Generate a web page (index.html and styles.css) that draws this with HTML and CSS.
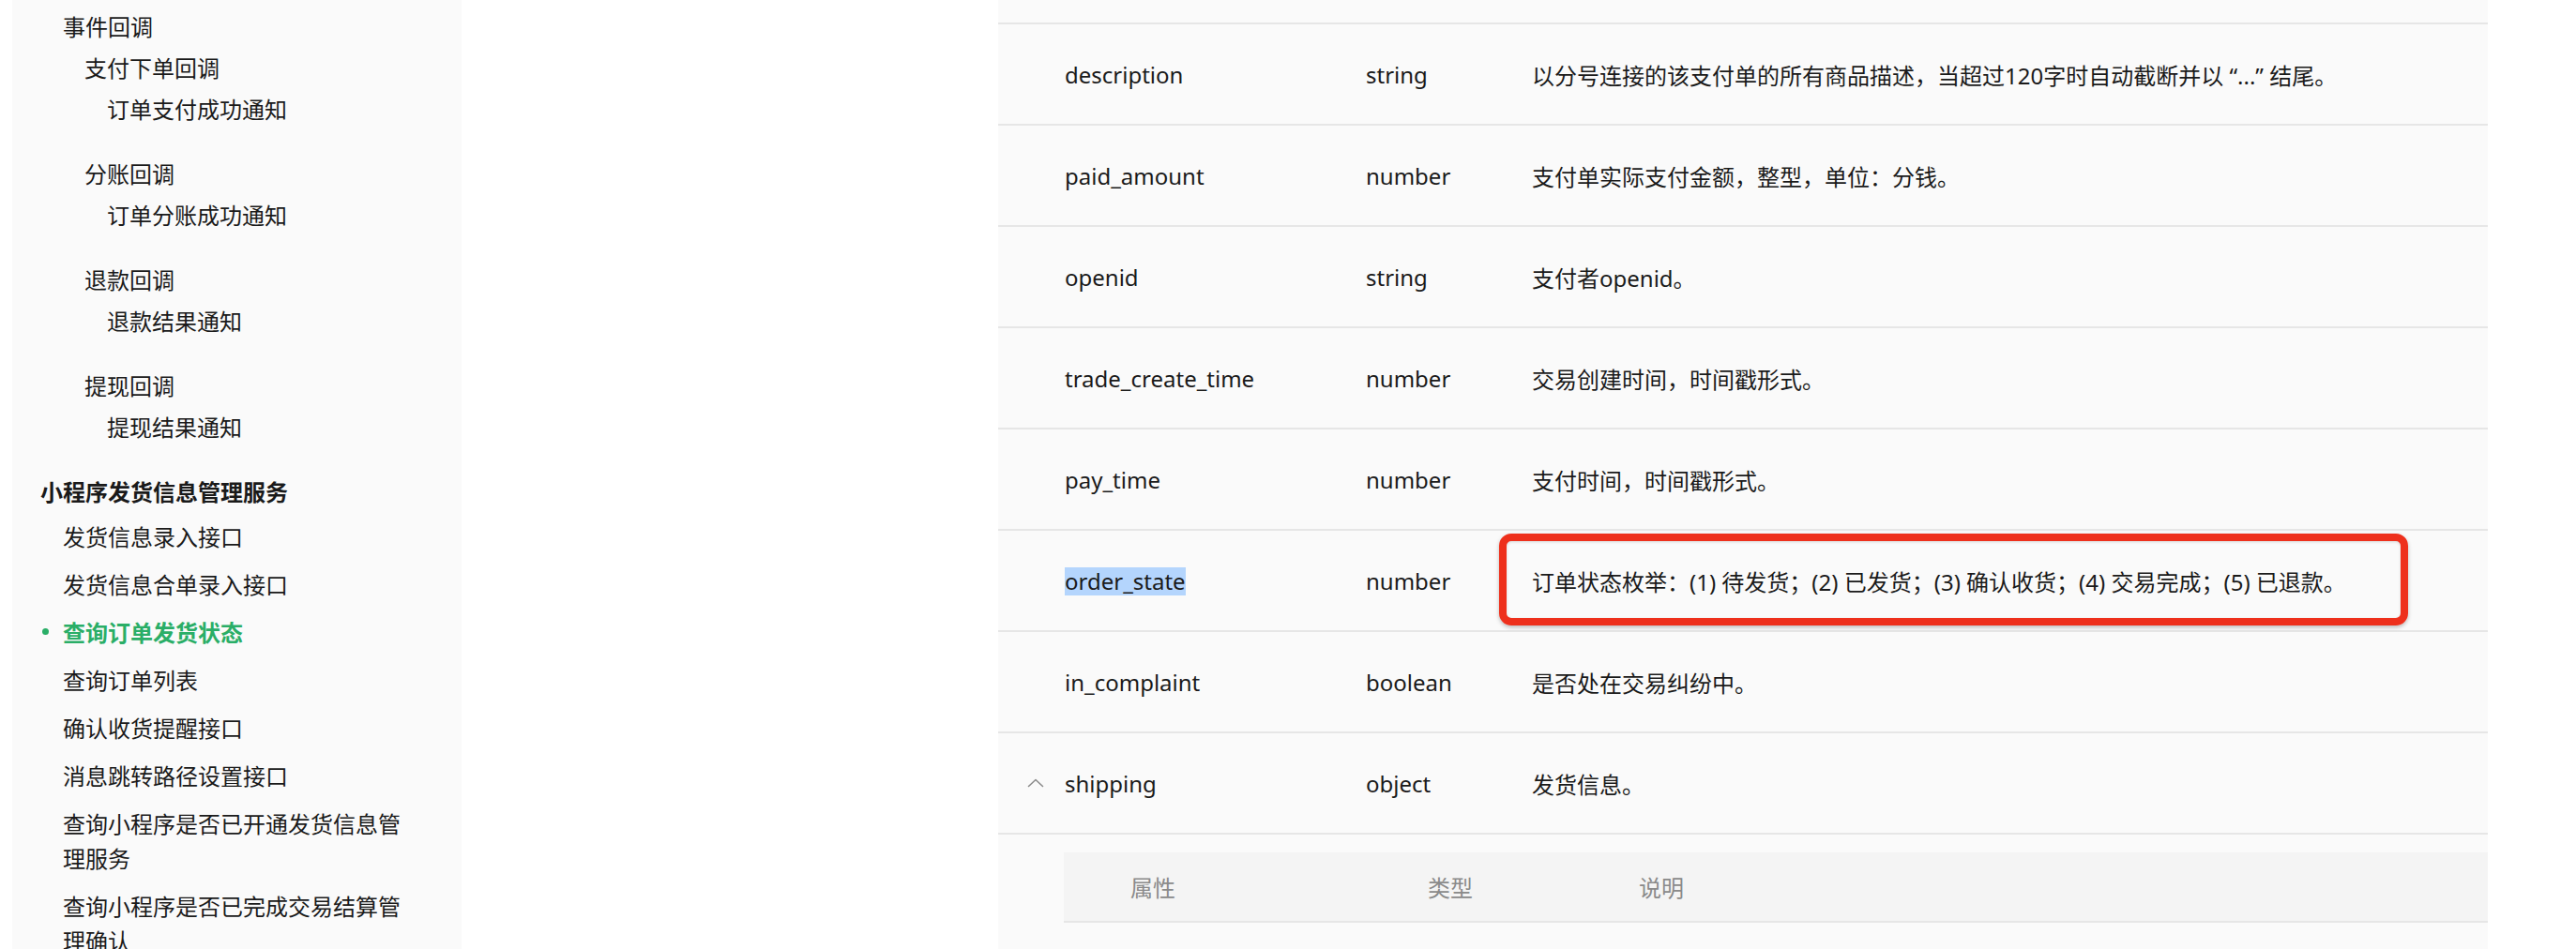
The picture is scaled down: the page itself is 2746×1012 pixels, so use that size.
FILE: index.html
```html
<!DOCTYPE html>
<html lang="zh-CN">
<head>
<meta charset="utf-8">
<title>查询订单发货状态</title>
<link rel="stylesheet" href="styles.css">
</head>
<body>
<div class="page">
  <aside class="sidebar">
    <div class="nav-group">
      <div class="nav-l1">事件回调</div>
      <div class="nav-sub">
        <div class="nav-l2">支付下单回调</div>
        <div class="nav-l3">订单支付成功通知</div>
      </div>
      <div class="nav-sub">
        <div class="nav-l2">分账回调</div>
        <div class="nav-l3">订单分账成功通知</div>
      </div>
      <div class="nav-sub">
        <div class="nav-l2">退款回调</div>
        <div class="nav-l3">退款结果通知</div>
      </div>
      <div class="nav-sub">
        <div class="nav-l2">提现回调</div>
        <div class="nav-l3">提现结果通知</div>
      </div>
    </div>
    <div class="section">
      <div class="section-title">小程序发货信息管理服务</div>
      <ul class="items">
        <li class="item">发货信息录入接口</li>
        <li class="item">发货信息合单录入接口</li>
        <li class="item active">查询订单发货状态</li>
        <li class="item">查询订单列表</li>
        <li class="item">确认收货提醒接口</li>
        <li class="item">消息跳转路径设置接口</li>
        <li class="item">查询小程序是否已开通发货信息管理服务</li>
        <li class="item">查询小程序是否已完成交易结算管理确认</li>
      </ul>
    </div>
  </aside>

  <main class="content">
    <div class="table">
      <div class="row row-partial"></div>
      <div class="row">
        <div class="toggle"></div>
        <div class="cell">description</div>
        <div class="cell">string</div>
        <div class="cell">以分号连接的该支付单的所有商品描述，当超过120字时自动截断并以 “...” 结尾。</div>
      </div>
      <div class="row">
        <div class="toggle"></div>
        <div class="cell">paid_amount</div>
        <div class="cell">number</div>
        <div class="cell">支付单实际支付金额，整型，单位：分钱。</div>
      </div>
      <div class="row">
        <div class="toggle"></div>
        <div class="cell">openid</div>
        <div class="cell">string</div>
        <div class="cell">支付者openid。</div>
      </div>
      <div class="row">
        <div class="toggle"></div>
        <div class="cell">trade_create_time</div>
        <div class="cell">number</div>
        <div class="cell">交易创建时间，时间戳形式。</div>
      </div>
      <div class="row">
        <div class="toggle"></div>
        <div class="cell">pay_time</div>
        <div class="cell">number</div>
        <div class="cell">支付时间，时间戳形式。</div>
      </div>
      <div class="row row-marked">
        <div class="toggle"></div>
        <div class="cell"><span class="selected">order_state</span></div>
        <div class="cell">number</div>
        <div class="cell">订单状态枚举：(1) 待发货；(2) 已发货；(3) 确认收货；(4) 交易完成；(5) 已退款。</div>
        <div class="annotation"></div>
      </div>
      <div class="row">
        <div class="toggle"></div>
        <div class="cell">in_complaint</div>
        <div class="cell">boolean</div>
        <div class="cell">是否处在交易纠纷中。</div>
      </div>
      <div class="row">
        <div class="toggle">
          <svg class="chevron" width="18" height="10" viewBox="0 0 18 10"><polyline points="1.5,8.5 9,1.5 16.5,8.5" fill="none" stroke="#8c8c8c" stroke-width="1.6" stroke-linecap="round" stroke-linejoin="round"/></svg>
        </div>
        <div class="cell">shipping</div>
        <div class="cell">object</div>
        <div class="cell">发货信息。</div>
      </div>
      <div class="nested">
        <div class="nested-head">
          <div class="toggle"></div>
          <div class="hcell">属性</div>
          <div class="hcell">类型</div>
          <div class="hcell">说明</div>
        </div>
        <div class="nested-body"></div>
      </div>
    </div>
  </main>
</div>
</body>
</html>
```

FILE: styles.css
```css
* { box-sizing: border-box; }
html, body { margin: 0; padding: 0; background: #ffffff; }
body {
  font-family: "Noto Sans", "Noto Sans CJK SC", sans-serif;
  color: #1a1a1a;
  font-size: 24px;
  overflow: hidden;
}
.page {
  display: flex;
  align-items: flex-start;
  height: 1012px;
  overflow: hidden;
}

/* Sidebar */
.sidebar {
  margin-left: 13px;
  width: 479px;
  height: 1012px;
  flex: none;
  background: #fafafa;
  padding: 6px 50px 0 30px;
  font-family: "Noto Sans CJK SC", sans-serif;
}
.nav-group { padding-left: 24px; }
.nav-l1 { line-height: 44px; }
.nav-sub { padding-left: 23px; margin-bottom: 25px; }
.nav-l2 { line-height: 44px; }
.nav-l3 { line-height: 44px; padding-left: 24px; }
.section-title {
  line-height: 44px;
  font-weight: 700;
  color: #1a1a1a;
}
.items { list-style: none; margin: 0; padding: 0 0 0 24px; }
.item {
  position: relative;
  line-height: 37px;
  padding: 7px 0;
}
.item.active {
  color: #2aae67;
  font-weight: 700;
}
.item.active::before {
  content: "";
  position: absolute;
  left: -22px;
  top: 22px;
  width: 7px;
  height: 7px;
  border-radius: 50%;
  background: #2aae67;
}

/* Main */
.content {
  flex: 1;
  padding: 0 94px 0 572px;
}
.table {
  background: #fafafa;
  height: 1012px;
}
.row {
  position: relative;
  display: grid;
  grid-template-columns: 71px 321px 177px 1fr;
  align-items: center;
  height: 108px;
  border-bottom: 2px solid #e6e6e6;
}
.row-partial { height: 26px; }
.toggle {
  display: flex;
  align-items: center;
  padding-left: 31px;
}
.chevron { display: block; }
.cell { white-space: nowrap; }
.selected {
  display: inline-block;
  line-height: 30px;
  background: #b4d5fd;
}
.annotation {
  position: absolute;
  left: 534px;
  top: 3px;
  width: 969px;
  height: 98px;
  border: 8px solid #ee301c;
  border-radius: 13px;
  box-shadow: 0 2px 4px rgba(0, 0, 0, 0.25), inset 0 1px 3px rgba(0, 0, 0, 0.15);
  pointer-events: none;
}

/* Nested table */
.nested { padding: 19px 0 0 70px; }
.nested-head {
  display: grid;
  grid-template-columns: 71px 317px 225px 1fr;
  align-items: center;
  height: 75px;
  background: #f4f4f4;
  border-bottom: 2px solid #e6e6e6;
  color: #8a8a8a;
}
.nested-body { height: 60px; }
```
